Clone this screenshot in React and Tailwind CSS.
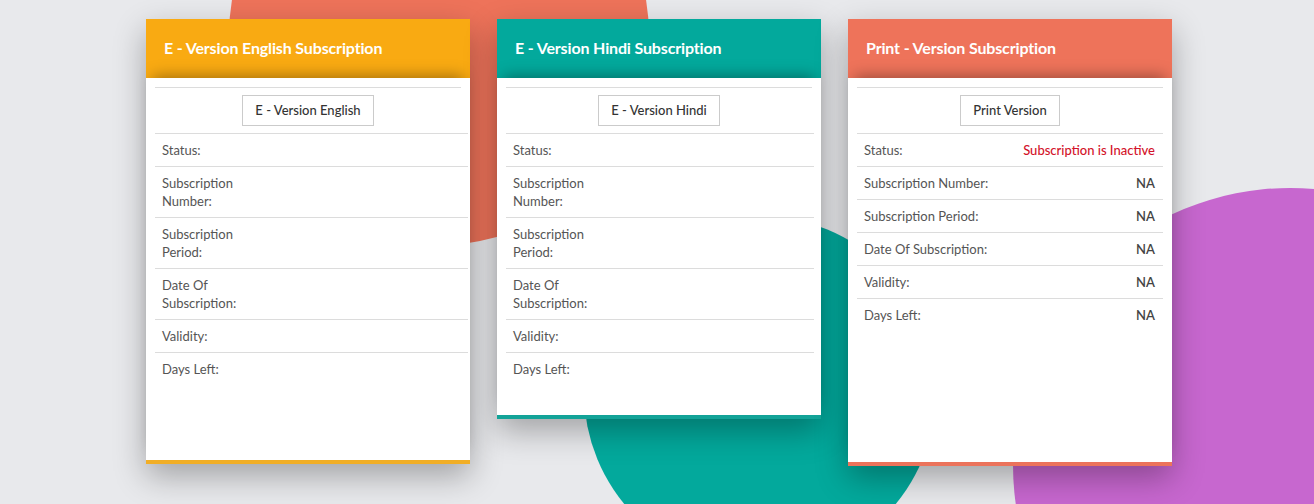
import React from 'react'

const labels = ['Status:', 'Subscription Number:', 'Subscription Period:', 'Date Of Subscription:', 'Validity:', 'Days Left:']

const cards = [
  {
    title: 'E - Version English Subscription',
    button: 'E - Version English',
    head: 'bg-[#f9aa12]',
    edge: 'border-[#f1ae26]',
    height: 'h-[445px]',
    table: '-mr-[7px]',
    wrap: true,
  },
  {
    title: 'E - Version Hindi Subscription',
    button: 'E - Version Hindi',
    head: 'bg-[#03a99c]',
    edge: 'border-[#13a398]',
    height: 'h-[400px]',
    table: '-mr-[2px]',
    wrap: true,
  },
  {
    title: 'Print - Version Subscription',
    button: 'Print Version',
    head: 'bg-[#ee735a]',
    edge: 'border-[#ec735b]',
    height: 'h-[447px]',
    table: '',
    wrap: false,
    values: ['Subscription is Inactive', 'NA', 'NA', 'NA', 'NA', 'NA'],
  },
]

function Backdrop() {
  return (
    <svg className="pointer-events-none absolute inset-0" width="1314" height="504" viewBox="0 0 1314 504">
      <circle cx="439" cy="35" r="210" fill="#ee735a" />
      <circle cx="760" cy="392" r="176" fill="#03a99c" />
      <circle cx="1290" cy="465" r="277" fill="#c767cf" />
    </svg>
  )
}

function Card({ card }) {
  return (
    <div className={`flex w-[324px] flex-col border-b-4 bg-white shadow-[0_12px_30px_rgba(0,0,0,0.3)] ${card.height} ${card.edge}`}>
      <div className={`flex h-[59px] shrink-0 items-center px-[18px] pb-[2px] text-[16px] font-bold tracking-[-0.15px] text-white ${card.head}`}>
        {card.title}
      </div>
      {/* body casts a soft shadow up into the header */}
      <div className="relative flex-1 bg-white px-[9px] pt-[9px] shadow-[0_-9px_14px_-7px_rgba(0,0,0,0.35)]">
        <div className="flex justify-center border-t border-[#dcdcdc] py-[7px]">
          <button className="h-[31px] border border-[#cbcbcb] bg-white px-3 text-[13px] font-medium text-[#333]">
            {card.button}
          </button>
        </div>
        <div className={card.table}>
          {labels.map((label, i) => (
            <div
              key={label}
              className="flex items-start justify-between border-t border-[#dcdcdc] py-[7px] pl-[7px] pr-2 text-[13px] leading-[18px]"
            >
              <span className={`text-[#555] ${card.wrap ? 'max-w-[86px]' : ''}`}>{label}</span>
              {card.values && (
                <span className={i === 0 ? 'font-medium text-[#d3122a]' : 'font-semibold text-[#444]'}>
                  {card.values[i]}
                </span>
              )}
            </div>
          ))}
        </div>
      </div>
    </div>
  )
}

export default function App() {
  return (
    <div className="relative h-[504px] overflow-hidden bg-[#e8e9ec] font-['Lato',sans-serif]">
      <Backdrop />
      <div className="relative flex items-start justify-center gap-[27px] pl-1 pt-[19px]">
        {cards.map((card) => (
          <Card key={card.title} card={card} />
        ))}
      </div>
    </div>
  )
}
